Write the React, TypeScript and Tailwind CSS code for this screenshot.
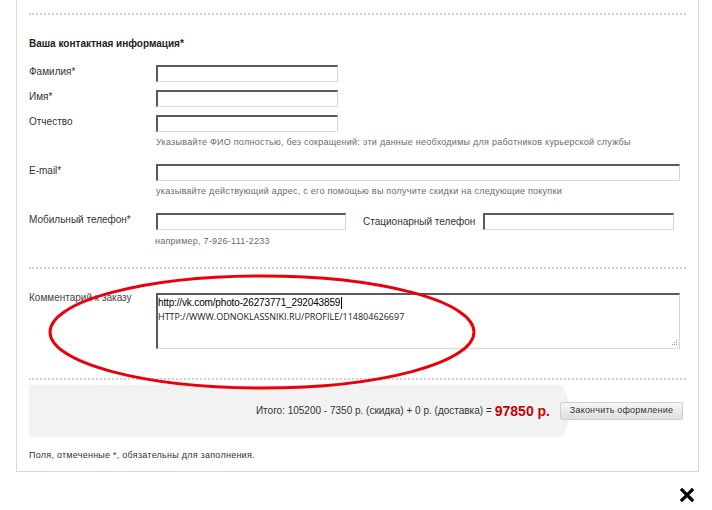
import React from "react";

const inputCls =
  "h-[17px] bg-white border-t-2 border-l-2 border-r border-b border-t-[#5a5a5a] border-l-[#5a5a5a] border-r-[#d4d4d4] border-b-[#dcdcdc]";

const hintCls =
  "text-[9px] leading-[11px] tracking-[0.25px] text-[#6a6a6a] whitespace-nowrap";

function Divider({ className = "" }: { className?: string }) {
  return <div className={"h-[2px] border-t-2 border-dotted border-[#d2d2d2] " + className} />;
}

function Row({ label, width, className = "" }: { label: string; width: string; className?: string }) {
  return (
    <div className={"flex items-start " + className}>
      <div className="w-[127px] shrink-0 text-[10px] leading-[14px] text-[#333]">{label}</div>
      <div className={inputCls + " " + width} />
    </div>
  );
}

export default function App() {
  return (
    <div className="relative w-[712px] h-[510px] bg-white overflow-hidden font-['Liberation_Sans',Arial,sans-serif]">
      <div className="ml-[16px] w-[683px] h-[472px] border-l border-r border-b border-[#d9d9d9] pl-[12px] pr-[12px] pt-[13px] flex flex-col">
        <Divider />
        <div className="mt-[22px] text-[10px] leading-[14px] font-bold text-[#222]">
          Ваша контактная информация*
        </div>

        <Row label="Фамилия*" width="w-[182px]" className="mt-[14px]" />
        <Row label="Имя*" width="w-[182px]" className="mt-[8px]" />
        <Row label="Отчество" width="w-[182px]" className="mt-[8px]" />
        <div className={"mt-[5px] ml-[127px] " + hintCls}>
          Указывайте ФИО полностью, без сокращений: эти данные необходимы для работников курьерской службы
        </div>

        <Row label="E-mail*" width="w-[524px]" className="mt-[16px]" />
        <div className={"mt-[5px] ml-[127px] " + hintCls}>
          указывайте действующий адрес, с его помощью вы получите скидки на следующие покупки
        </div>

        <div className="mt-[16px] flex items-start">
          <div className="w-[127px] shrink-0 text-[10px] leading-[14px] text-[#333]">Мобильный телефон*</div>
          <div className="flex items-center">
            <div className={inputCls + " w-[190px]"} />
            <div className="ml-[17px] text-[10px] leading-[14px] text-[#333]">Стационарный телефон</div>
            <div className={inputCls + " w-[191px] ml-[8px]"} />
          </div>
        </div>
        <div className={"mt-[6px] ml-[126px] " + hintCls}>например, 7-926-111-2233</div>

        <Divider className="mt-[20px]" />

        <div className="mt-[24px] flex items-start">
          <div className="w-[127px] shrink-0 -mt-[2px] text-[10px] leading-[14px] text-[#444]">
            Комментарий к заказу
          </div>
          <div className="relative w-[524px] h-[56px] bg-white border-t-2 border-l-2 border-r border-b border-t-[#5a5a5a] border-l-[#5a5a5a] border-r-[#d4d4d4] border-b-[#dcdcdc] pt-[1px]">
            <div className="flex items-center text-[10px] leading-[14px] tracking-[-0.15px] text-black">
              <span>http://vk.com/photo-26273771_292043859</span>
              <span className="inline-block w-[1px] h-[12px] bg-black ml-[1px]" />
            </div>
            <div className="text-[9px] leading-[14px] text-[#222] font-['Open_Sans',sans-serif]">
              HTTP://WWW.ODNOKLASSNIKI.RU/PROFILE/114804626697
            </div>
            <svg className="absolute right-[1px] bottom-[1px]" width="8" height="8" viewBox="0 0 8 8">
              <rect x="6" y="1" width="1" height="1" fill="#999" />
              <rect x="4" y="3" width="1" height="1" fill="#999" />
              <rect x="6" y="3" width="1" height="1" fill="#999" />
              <rect x="2" y="5" width="1" height="1" fill="#999" />
              <rect x="4" y="5" width="1" height="1" fill="#999" />
              <rect x="6" y="5" width="1" height="1" fill="#999" />
            </svg>
          </div>
        </div>

        <Divider className="mt-[29px]" />

        <div className="mt-[5px] flex items-center">
          <div className="w-[543px] h-[52px] bg-[#f2f2f2] [clip-path:polygon(0_0,calc(100%-9px)_0,100%_50%,calc(100%-9px)_100%,0_100%)] flex items-center justify-end pr-[22px]">
            <span className="text-[10px] leading-[14px] text-[#333]">
              Итого: 105200 - 7350 р. (скидка) + 0 р. (доставка) ={" "}
            </span>
            <span className="ml-[3px] text-[14px] leading-[16px] font-bold text-[#cc0000]">97850 р.</span>
          </div>
          <div className="relative z-10 -ml-[12px] w-[123px] h-[18px] rounded-[2px] border border-[#cfcfcf] bg-gradient-to-b from-[#f7f7f7] to-[#dedede] flex items-center justify-center text-[9px] text-[#333] tracking-[0.2px]">
            Закончить оформление
          </div>
        </div>

        <div className={"mt-[13px] " + hintCls + " text-[#333]"}>
          Поля, отмеченные *, обязательны для заполнения.
        </div>
      </div>

      <svg className="absolute left-[680px] top-[488px]" width="14" height="14" viewBox="0 0 14 14">
        <path d="M2 2 L12 12 M12 2 L2 12" stroke="#000" strokeWidth="3.2" strokeLinecap="square" />
      </svg>

      <svg className="absolute left-0 top-0 pointer-events-none" width="712" height="510" viewBox="0 0 712 510">
        <ellipse cx="262" cy="332" rx="212" ry="56" fill="none" stroke="#e8000b" strokeWidth="3" />
      </svg>
    </div>
  );
}
